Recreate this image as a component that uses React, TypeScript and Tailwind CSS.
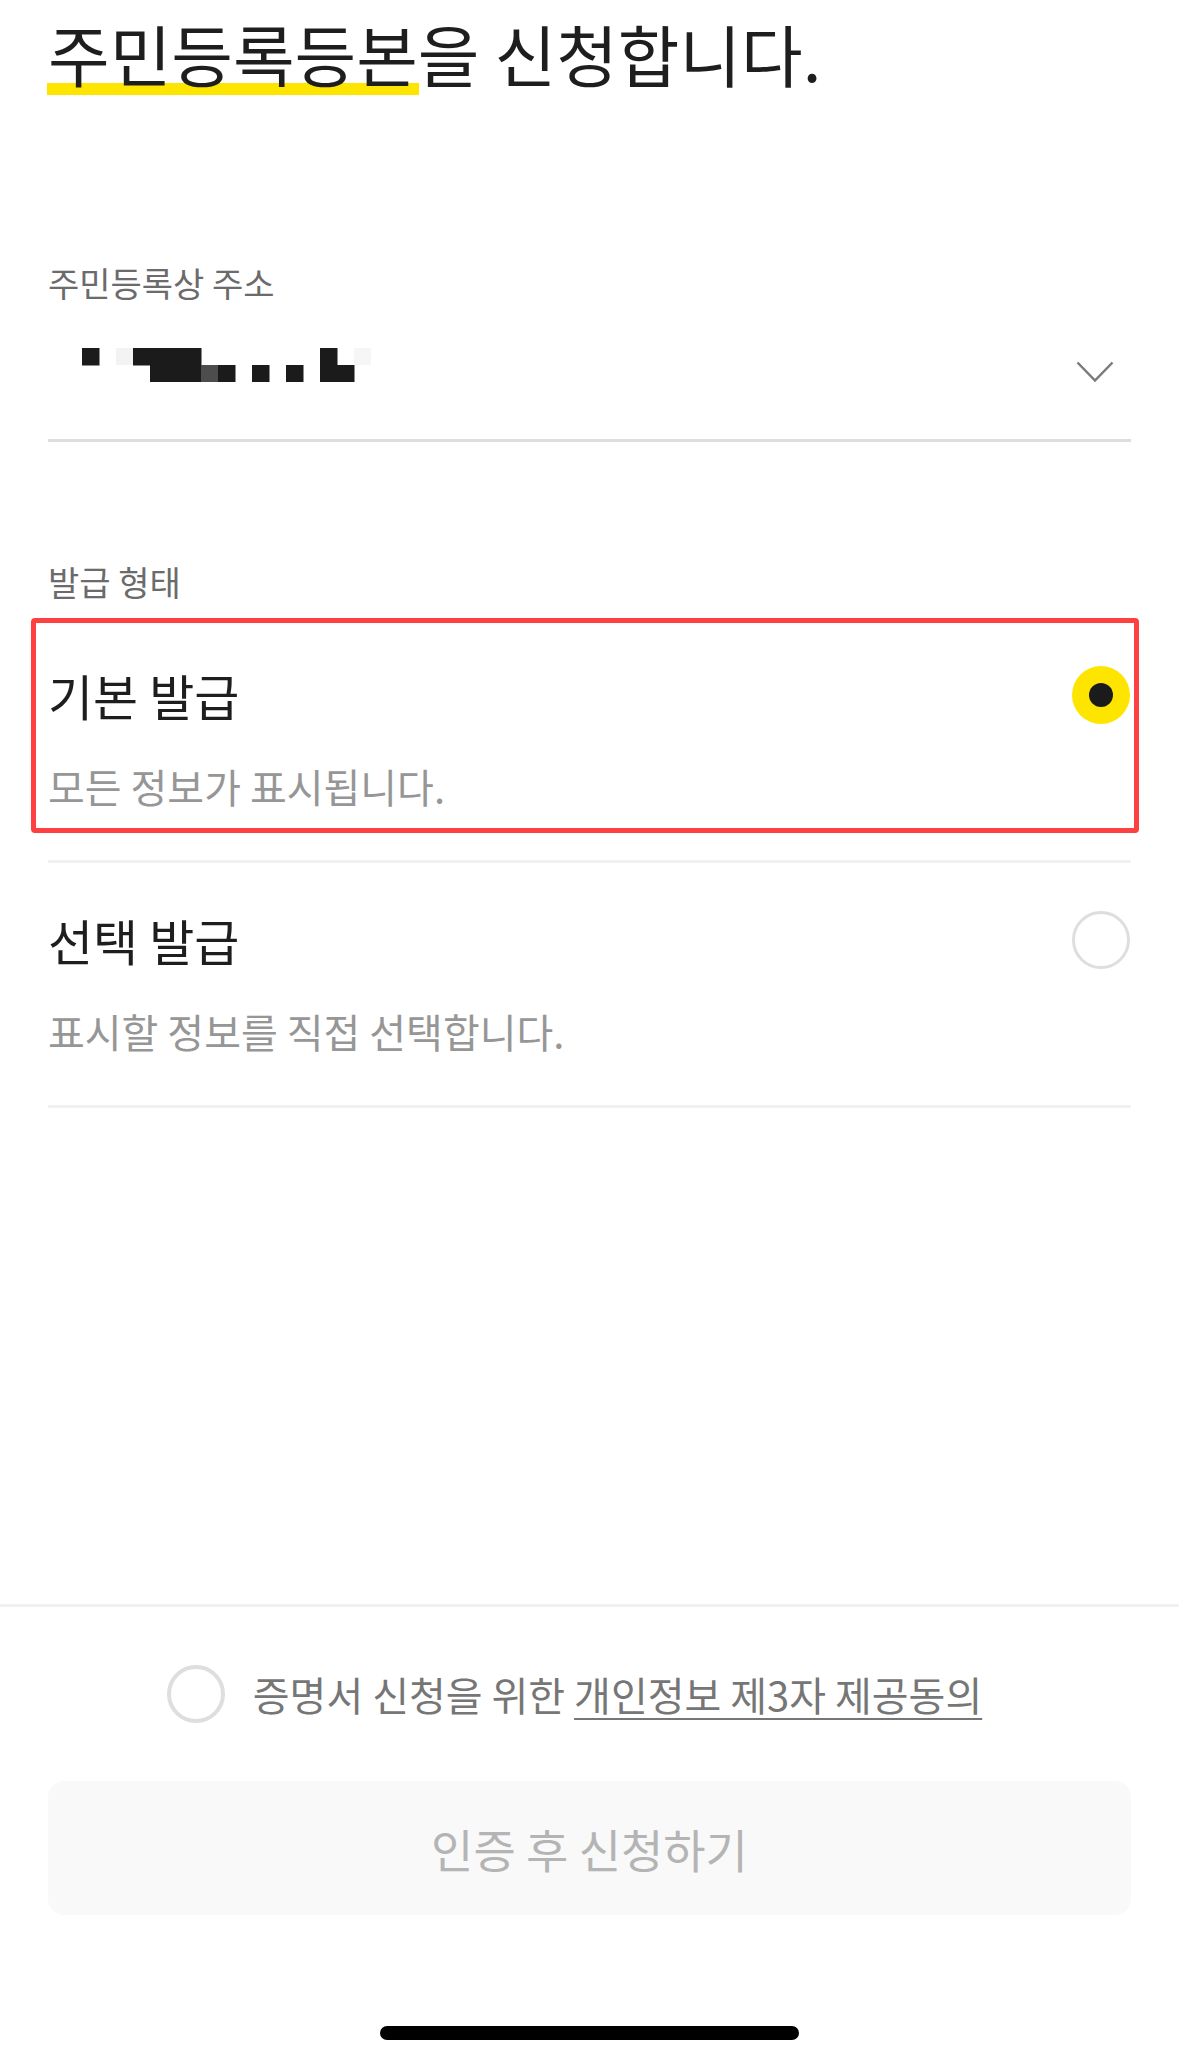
export default function App() {
  const top: number[] = [0, 3, 4, 5, 6, 14];
  const bottom: number[] = [4, 5, 6, 8, 10, 12, 14, 15];
  return (
    <div className="w-[1179px] h-[2066px] bg-white flex flex-col overflow-hidden font-['Noto_Sans_CJK_KR','Noto_Sans',sans-serif]">
      <div className="px-12 flex flex-col">
        <h1 className="pt-[17px] text-[67px] leading-[72px] font-normal text-[#1e1e1e] whitespace-nowrap">
          <span className="relative inline-block">
            <span className="absolute left-[-1px] right-[-1px] bottom-[-6px] h-[12px] bg-[#FEE500]"></span>
            <span className="relative">주민등록등본</span>
          </span>
          을 신청합니다.
        </h1>

        <div className="mt-[174px] text-[34px] leading-[40px] text-[#6b6b6b]">주민등록상 주소</div>
        <div className="h-[139px] flex items-center justify-between border-b-[3px] border-[#dddddd]">
          <svg width="300" height="34" viewBox="0 0 300 34" className="ml-[34px] mb-[12px]">
            {top.map((c) => (
              <rect key={"t" + c} x={c * 17} y={0} width={17.5} height={17.5} fill="#1b1b1b" />
            ))}
            {bottom.map((c) => (
              <rect key={"b" + c} x={c * 17} y={17} width={17.5} height={17} fill="#1b1b1b" />
            ))}
            <rect x={7 * 17} y={17} width={17} height={17} fill="#4d4d4d" />
            <rect x={2 * 17} y={0} width={17} height={17} fill="#f3f3f3" />
            <rect x={16 * 17} y={0} width={17} height={17} fill="#f6f6f6" />
          </svg>
          <svg width="38" height="22" viewBox="0 0 38 22" className="mr-[17px] mt-[2px]">
            <polyline points="1.5,1.5 19,19.5 36.5,1.5" fill="none" stroke="#7a7a7a" strokeWidth="2.5" />
          </svg>
        </div>

        <div className="mt-[120px] text-[34px] leading-[40px] text-[#6b6b6b]">발급 형태</div>
        <div className="mt-[16px] flex flex-col">
          <div className="relative pt-[52px] pb-[52px] border-b-[3px] border-[#f1f1f1]">
            <div className="flex items-center justify-between h-[50px]">
              <span className="text-[49px] leading-[50px] text-[#1e1e1e]">기본 발급</span>
              <div className="w-[58px] h-[58px] rounded-full bg-[#FEE500] flex items-center justify-center mr-[1px]">
                <div className="w-[24px] h-[24px] rounded-full bg-[#1b1b1b]"></div>
              </div>
            </div>
            <div className="mt-[44px] text-[40px] leading-[44px] text-[#969696]">모든 정보가 표시됩니다.</div>
            <div className="pointer-events-none absolute left-[-17px] right-[-8px] top-0 h-[215px] border-[5px] border-[#ff4040] rounded-[4px]"></div>
          </div>
          <div className="pt-[52px] pb-[52px] border-b-[3px] border-[#f1f1f1]">
            <div className="flex items-center justify-between h-[50px]">
              <span className="text-[49px] leading-[50px] text-[#1e1e1e]">선택 발급</span>
              <div className="w-[58px] h-[58px] rounded-full border-[3px] border-[#dedede] mr-[1px]"></div>
            </div>
            <div className="mt-[44px] text-[40px] leading-[44px] text-[#969696]">표시할 정보를 직접 선택합니다.</div>
          </div>
        </div>
      </div>

      <div className="flex-1"></div>

      <div className="border-t-[3px] border-[#f1f1f1] flex flex-col">
        <div className="mt-[58px] h-[58px] flex items-center justify-center gap-[28px] pr-[30px]">
          <div className="w-[58px] h-[58px] rounded-full border-[4px] border-[#dedede] shrink-0"></div>
          <span className="text-[40px] leading-[58px] text-[#767676] whitespace-nowrap">
            증명서 신청을 위한{" "}
            <span className="underline decoration-[2px] underline-offset-[7px]">개인정보 제3자 제공동의</span>
          </span>
        </div>
        <div className="mx-12 mt-[58px] h-[134px] rounded-[16px] bg-[#f9f9f9] flex items-center justify-center">
          <span className="text-[46px] text-[#b4b4b4]">인증 후 신청하기</span>
        </div>
        <div className="mt-[111px] mb-[26px] flex justify-center">
          <div className="w-[419px] h-[14px] rounded-full bg-black"></div>
        </div>
      </div>
    </div>
  );
}
